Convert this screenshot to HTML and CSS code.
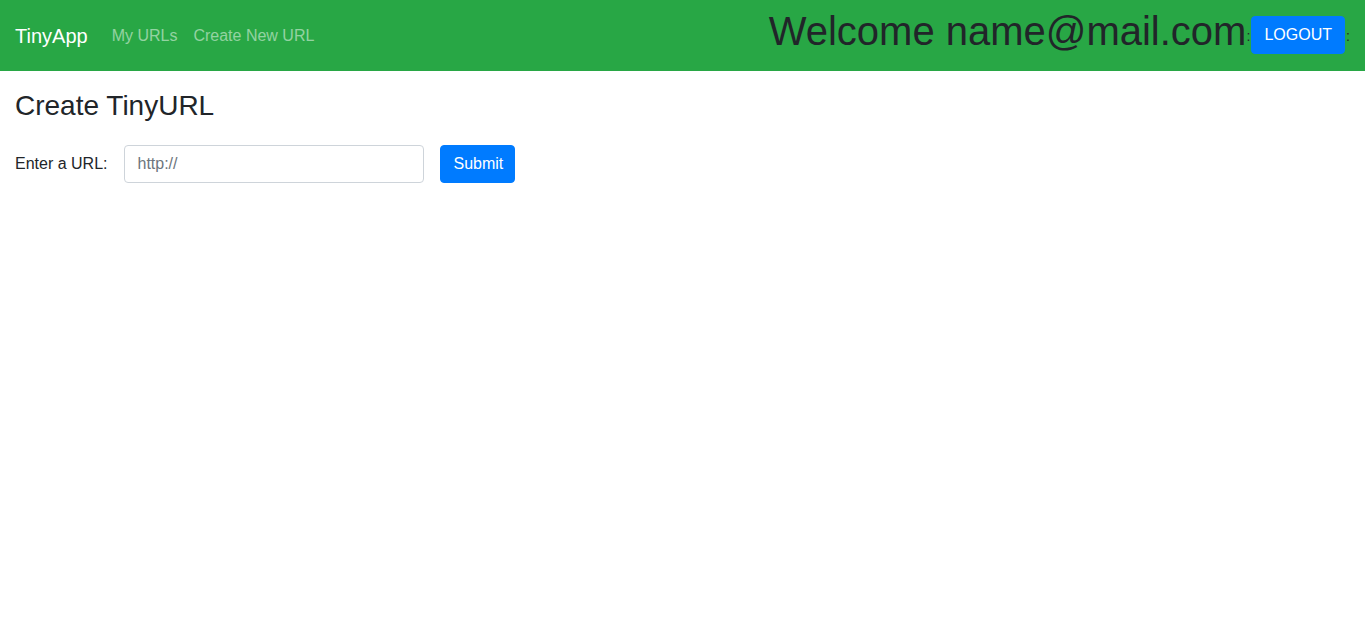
FILE: index.html
```html
<!DOCTYPE html>
<html lang="en">
<head>
<meta charset="utf-8">
<title>TinyApp</title>
<link rel="stylesheet" href="styles.css">
</head>
<body>
<nav class="navbar">
  <a class="brand" href="#">TinyApp</a>
  <ul class="nav-links">
    <li><a href="#">My URLs</a></li>
    <li><a href="#">Create New URL</a></li>
  </ul>
  <div class="user">
    <h1 class="welcome">Welcome name@mail.com</h1>
    <span class="sep">:</span>
    <button class="btn btn-primary logout" type="button">LOGOUT</button>
    <span class="sep sep-end">:</span>
  </div>
</nav>
<main class="container">
  <h3 class="title">Create TinyURL</h3>
  <form class="url-form">
    <label for="longURL">Enter a URL:</label>
    <input id="longURL" class="input" type="text" placeholder="http://">
    <button class="btn btn-primary submit" type="submit">Submit</button>
  </form>
</main>
</body>
</html>
```

FILE: styles.css
```css
* { box-sizing: border-box; }
html, body { margin: 0; padding: 0; }
body {
  font-family: "Liberation Sans", Arial, sans-serif;
  font-size: 16px;
  line-height: 1.5;
  color: #212529;
  background: #fff;
}
a { text-decoration: none; }

.navbar {
  display: flex;
  align-items: center;
  height: 71px;
  padding: 0 16px 0 15px;
  background: #28a745;
}
.brand {
  font-size: 20px;
  line-height: 30px;
  color: #fff;
  margin-right: 16px;
}
.nav-links {
  display: flex;
  list-style: none;
  margin: 0;
  padding: 0;
}
.nav-links a {
  display: block;
  padding: 8px;
  color: rgba(255, 255, 255, 0.5);
}
.user {
  margin-left: auto;
  display: flex;
  align-items: center;
}
.welcome {
  margin: 0;
  font-size: 40px;
  font-weight: 400;
  line-height: 48px;
  color: #212529;
  position: relative;
  top: -5px;
}
.sep {
  font-size: 14px;
  line-height: 20px;
  color: #212529;
  width: 5px;
  overflow: hidden;
}
.sep-end { width: 3px; }
.btn {
  font-family: inherit;
  font-size: 16px;
  line-height: 24px;
  padding: 6px 12px;
  border: 1px solid transparent;
  border-radius: 4px;
  cursor: pointer;
}
.btn-primary {
  background: #007bff;
  border-color: #007bff;
  color: #fff;
}
.logout {
  margin: 0 1px 0 0;
  position: relative;
  top: -1px;
}
.submit { padding: 6px 11px 6px 12px; }

.container {
  padding: 18px 15px;
}
.title {
  margin: 0 0 22px;
  font-size: 28px;
  font-weight: 400;
  line-height: 34px;
}
.url-form {
  display: flex;
  align-items: center;
}
.url-form label {
  margin-right: 17px;
}
.input {
  width: 300px;
  height: 38px;
  padding: 6px 12px;
  font-family: inherit;
  font-size: 16px;
  color: #495057;
  border: 1px solid #ced4da;
  border-radius: 4px;
  margin-right: 16px;
}
.input::placeholder { color: #6c757d; }
```
